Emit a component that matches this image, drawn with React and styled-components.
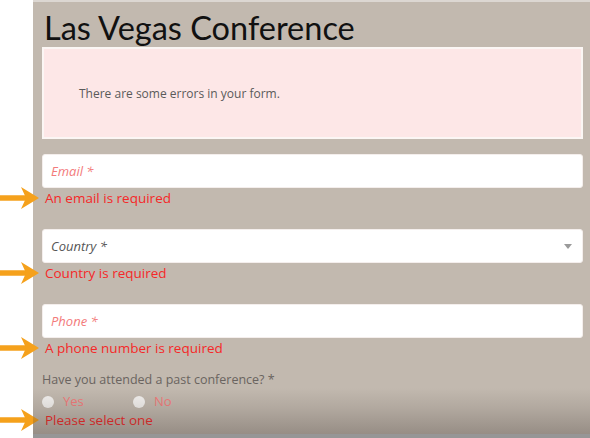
import styled, { createGlobalStyle } from "styled-components";

const GlobalStyle = createGlobalStyle`
  html, body {
    margin: 0;
    padding: 0;
    background: #ffffff;
  }
  body {
    font-family: "Open Sans", "Liberation Sans", sans-serif;
    overflow: hidden;
  }
`;

function Arrow() {
  return (
    <ArrowMark width="42" height="24" viewBox="0 0 42 24">
      <path d="M0 12 H28" stroke="#f5a11c" strokeWidth="5.5" />
      <path d="M23 1 L41 12 L23 23 L28 12 Z" fill="#f5a11c" />
    </ArrowMark>
  );
}

function ErrorMessage({ children }) {
  return (
    <ErrorText>
      <Arrow />
      {children}
    </ErrorText>
  );
}

export default function App() {
  return (
    <>
      <GlobalStyle />
      <Page>
        <Gutter />
        <Panel>
          <Title>Las Vegas Conference</Title>

          <Alert>There are some errors in your form.</Alert>

          <Form>
            <Field>
              <Input placeholder="Email *" $invalid />
              <ErrorMessage>An email is required</ErrorMessage>
            </Field>

            <Field>
              <SelectBox>
                <SelectLabel>Country *</SelectLabel>
                <Caret />
              </SelectBox>
              <ErrorMessage>Country is required</ErrorMessage>
            </Field>

            <Field $last>
              <Input placeholder="Phone *" $invalid />
              <ErrorMessage>A phone number is required</ErrorMessage>
            </Field>

            <Question>Have you attended a past conference? *</Question>
            <RadioGroup>
              <RadioOption>
                <RadioDot />
                Yes
              </RadioOption>
              <RadioOption>
                <RadioDot />
                No
              </RadioOption>
            </RadioGroup>
            <ErrorMessage>Please select one</ErrorMessage>
          </Form>
        </Panel>
        <Shade />
      </Page>
    </>
  );
}

const Page = styled.div`
  position: relative;
  display: flex;
  height: 438px;
  overflow: hidden;
`;

const Gutter = styled.div`
  width: 33px;
  flex-shrink: 0;
  background: #ffffff;
`;

const Panel = styled.div`
  flex: 1;
  background: #c2b9af;
  border-top: 2px solid #dcd7d2;
  padding: 0 7px 0 9px;
  display: flex;
  flex-direction: column;
`;

const Title = styled.h1`
  margin: 7px 0 0 2px;
  font-family: Lato, "Open Sans", sans-serif;
  font-weight: 400;
  font-size: 32.5px;
  line-height: 38px;
  color: #111111;
`;

const Alert = styled.div`
  height: 88px;
  display: flex;
  align-items: center;
  padding-left: 35px;
  background: #fde7e7;
  border: 2px solid #fbf6f4;
  font-size: 12px;
  color: #5a5a5a;
`;

const Form = styled.div`
  display: flex;
  flex-direction: column;
  margin-top: 15px;
`;

const Field = styled.div`
  display: flex;
  flex-direction: column;
  margin-bottom: ${(p) => (p.$last ? "13px" : "21px")};
`;

const Input = styled.input`
  box-sizing: border-box;
  height: 34px;
  width: 100%;
  border: 1px solid #f4eeec;
  border-radius: 3px;
  background: #ffffff;
  padding: 0 8px;
  font-family: "Open Sans", sans-serif;
  font-size: 13px;
  outline: none;

  &::placeholder {
    font-style: italic;
    color: ${(p) => (p.$invalid ? "#f37b7b" : "#555555")};
  }
`;

const SelectBox = styled.div`
  box-sizing: border-box;
  height: 34px;
  display: flex;
  align-items: center;
  justify-content: space-between;
  border: 1px solid #f4eeec;
  border-radius: 3px;
  background: #ffffff;
  padding: 0 8px;
`;

const SelectLabel = styled.span`
  font-size: 13px;
  font-style: italic;
  color: #555555;
`;

const Caret = styled.span`
  width: 0;
  height: 0;
  margin-right: 2px;
  border-left: 4px solid transparent;
  border-right: 4px solid transparent;
  border-top: 5px solid #9a9a9a;
`;

const ErrorText = styled.div`
  position: relative;
  padding-left: 3px;
  font-size: 13.5px;
  line-height: 20px;
  color: #f52828;
`;

const ArrowMark = styled.svg`
  position: absolute;
  left: -44px;
  top: -2px;
`;

const Question = styled.div`
  font-size: 12.5px;
  line-height: 18px;
  color: #6a6460;
`;

const RadioGroup = styled.div`
  display: flex;
  margin-top: 4px;
`;

const RadioOption = styled.label`
  display: flex;
  align-items: center;
  gap: 9px;
  width: 91px;
  font-size: 13px;
  line-height: 17px;
  color: #f37b7b;
`;

const RadioDot = styled.span`
  width: 12px;
  height: 12px;
  border-radius: 50%;
  background: #f4f2f0;
`;

const Shade = styled.div`
  position: absolute;
  left: 33px;
  right: 0;
  bottom: 0;
  height: 50px;
  pointer-events: none;
  background: linear-gradient(
    to bottom,
    rgba(60, 50, 45, 0) 0%,
    rgba(60, 50, 45, 0.12) 40%,
    rgba(60, 50, 45, 0.32) 92%,
    rgba(150, 150, 150, 1) 93%
  );
`;
